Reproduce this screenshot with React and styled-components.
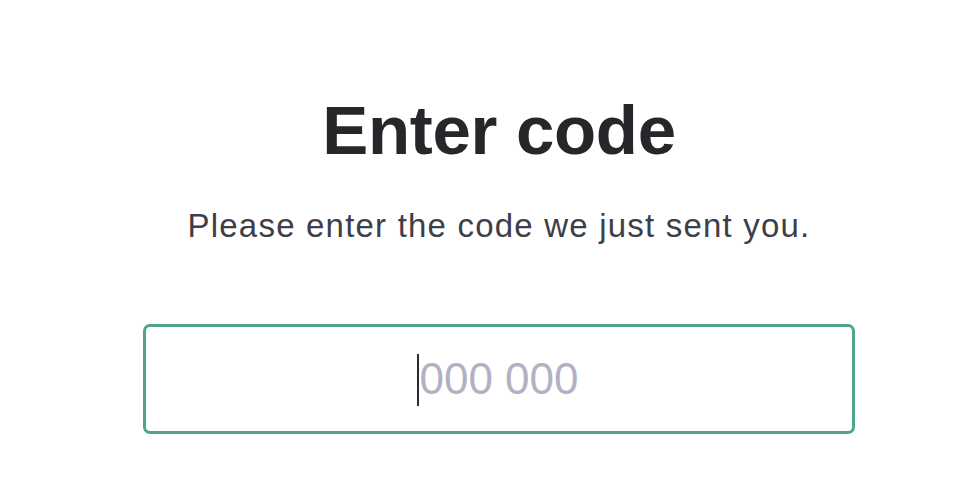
import React from 'react';
import styled, { createGlobalStyle } from 'styled-components';

const GlobalStyle = createGlobalStyle`
  html, body {
    margin: 0;
    padding: 0;
    background: #ffffff;
  }
  body {
    font-family: "Liberation Sans", Arial, sans-serif;
  }
`

const Main = styled.main`
  display: flex;
  flex-direction: column;
  align-items: center;
  padding: 86px 0 0 42px;
`

const Title = styled.h1`
  margin: 0;
  font-size: 69px;
  line-height: 90px;
  font-weight: 700;
  color: #26272a;
  letter-spacing: -0.3px;
`

const Subtitle = styled.p`
  margin: 30px 0 0;
  font-size: 33px;
  line-height: 40px;
  color: #3d3e48;
  letter-spacing: 1.2px;
`

const Field = styled.div`
  position: relative;
  margin-top: 78px;
  width: 712px;
`

const CodeInput = styled.input`
  box-sizing: border-box;
  display: block;
  width: 100%;
  height: 110px;
  border: 3px solid #4fa584;
  border-radius: 7px;
  outline: none;
  background: #fff;
  text-align: center;
  font-family: "Liberation Sans", Arial, sans-serif;
  font-size: 44px;
  color: #26272a;
  caret-color: transparent;

  &::placeholder {
    color: #b2b1c4;
  }
`

const Caret = styled.span`
  position: absolute;
  top: 30px;
  left: calc(50% - 82px);
  width: 2px;
  height: 52px;
  background: #2a2a2e;
`

export default function App() {
  return (
    <Main>
      <GlobalStyle />
      <Title>Enter code</Title>
      <Subtitle>Please enter the code we just sent you.</Subtitle>
      <Field>
        <CodeInput type='text' inputMode='numeric' placeholder='000 000' />
        <Caret />
      </Field>
    </Main>
  )
}
